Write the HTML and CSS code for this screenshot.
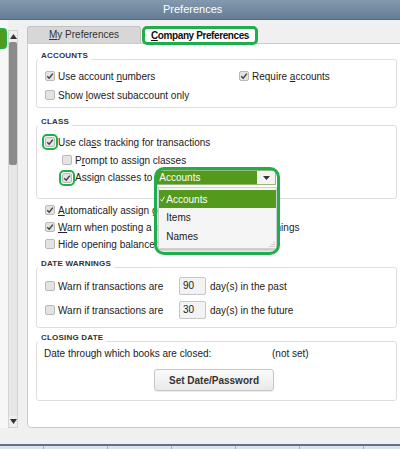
FILE: index.html
```html
<!DOCTYPE html>
<html lang="en">
<head>
    <meta charset="UTF-8">
    <title>Preferences</title>
    <link rel="stylesheet" href="styles.css">
</head>
<body>
    <header class="titlebar">Preferences</header>

    <div class="main">
        <div class="side">
            <div class="side-list"><div class="side-sel"></div></div>
            <div class="scrollbar">
                <div class="sb-btn"><svg width="7" height="5" viewBox="0 0 7 5"><path d="M0 5 3.5 0 7 5z" fill="#333"/></svg></div>
                <div class="sb-track"><div class="sb-thumb"></div></div>
                <div class="sb-btn"><svg width="7" height="5" viewBox="0 0 7 5"><path d="M0 0 3.5 5 7 0z" fill="#333"/></svg></div>
            </div>
        </div>

        <div class="content">
            <div class="tabs">
                <div class="tab"><u>M</u>y Preferences</div>
                <div class="tab active"><u>C</u>ompany Preferences</div>
            </div>

            <div class="panel">
                <section class="group">
                    <h3 class="group-title">ACCOUNTS</h3>
                    <div class="grid2">
                        <label class="row"><span class="check on"><svg viewBox="0 0 8 8"><path d="M1.2 4.2 3.2 6.2 6.8 1.6"/></svg></span><span>Use account <u>n</u>umbers</span></label>
                        <label class="row"><span class="check on"><svg viewBox="0 0 8 8"><path d="M1.2 4.2 3.2 6.2 6.8 1.6"/></svg></span><span>Require <u>a</u>ccounts</span></label>
                        <label class="row"><span class="check"></span><span>Show <u>l</u>owest subaccount only</span></label>
                    </div>
                </section>

                <section class="group group-class">
                    <h3 class="group-title">CLASS</h3>
                    <label class="row r1"><span class="check on ring"><svg viewBox="0 0 8 8"><path d="M1.2 4.2 3.2 6.2 6.8 1.6"/></svg></span><span>Use cla<u>s</u>s tracking for transactions</span></label>
                    <label class="row r2 indent"><span class="check"></span><span>P<u>r</u>ompt to assign classes</span></label>
                    <div class="row r3 indent">
                        <span class="check on ring"><svg viewBox="0 0 8 8"><path d="M1.2 4.2 3.2 6.2 6.8 1.6"/></svg></span>
                        <span>Assi<u>g</u>n classes to</span>
                        <div class="combo">
                            <div class="select">
                                <div class="select-value">Accounts</div>
                                <div class="select-arrow"><svg width="7" height="4" viewBox="0 0 7 4"><path d="M0 0 3.5 4 7 0z" fill="#333"/></svg></div>
                            </div>
                            <div class="popup">
                                <div class="popup-item sel"><span class="tick"><svg width="5" height="6" viewBox="0 0 5 6"><path d="M0.5 3.4 1.8 5.2 4.6 0.6" fill="none" stroke="#fff" stroke-width="0.9"/></svg></span>Accounts</div>
                                <div class="popup-item"><span class="tick"></span>Items</div>
                                <div class="popup-item"><span class="tick"></span>Names</div>
                                <svg class="grip" width="6" height="6" viewBox="0 0 6 6"><path d="M5 1v1M3 3v1M5 3v1M1 5v1M3 5v1M5 5v1" stroke="#aaa" stroke-width="1"/></svg>
                            </div>
                            <div class="ring-box"></div>
                        </div>
                    </div>
                </section>

                <div class="opts">
                    <label class="row"><span class="check on"><svg viewBox="0 0 8 8"><path d="M1.2 4.2 3.2 6.2 6.8 1.6"/></svg></span><span><u>A</u>utomatically assign general journal entry number</span></label>
                    <label class="row"><span class="check on"><svg viewBox="0 0 8 8"><path d="M1.2 4.2 3.2 6.2 6.8 1.6"/></svg></span><span><u>W</u>arn when posting a transaction to Retained Earnings</span></label>
                    <label class="row"><span class="check"></span><span>Hide opening balance fields</span></label>
                </div>

                <section class="group group-date">
                    <h3 class="group-title">DATE WARNINGS</h3>
                    <div class="date-row">
                        <label class="date-label"><span class="check"></span><span>Warn if transactions are</span></label>
                        <span class="num">90</span>
                        <span>day(s) in the past</span>
                    </div>
                    <div class="date-row">
                        <label class="date-label"><span class="check"></span><span>Warn if transactions are</span></label>
                        <span class="num">30</span>
                        <span>day(s) in the future</span>
                    </div>
                </section>

                <section class="group group-closing">
                    <h3 class="group-title">CLOSING DATE</h3>
                    <div class="closing-row">
                        <span>Date through which books are closed:</span>
                        <span>(not set)</span>
                    </div>
                    <button class="btn">Set Date/Password</button>
                </section>
            </div>
        </div>
    </div>

    <div class="desk"></div>
    <div class="taskbar">
        <span class="first"></span><span></span><span></span><span></span><span></span><span></span>
    </div>
</body>
</html>
```

FILE: styles.css
```css
* {
    box-sizing: border-box;
}

body {
    margin: 0;
    width: 400px;
    height: 449px;
    overflow: hidden;
    font-family: "Liberation Sans", Arial, sans-serif;
    font-size: 10px;
    color: #222;
    background: #f0f0f0;
}

u {
    text-underline-offset: 1px;
}

.titlebar {
    height: 20px;
    padding-left: 163px;
    line-height: 19px;
    font-size: 11px;
    color: #fff;
    background: linear-gradient(#8399ae, #647d95);
    border-bottom: 1px solid #52697f;
}

.main {
    display: flex;
    height: 408px;
}

/* left list edge + scrollbar */
.side {
    display: flex;
}

.side-list {
    width: 8px;
    background: #f7f7f7;
}

.side-sel {
    margin-top: 8px;
    width: 7px;
    height: 21px;
    background: #4f9b1d;
    border: 2px solid #22ad4a;
    border-left: 0;
    border-radius: 0 4px 4px 0;
}

.scrollbar {
    display: flex;
    flex-direction: column;
    width: 10px;
    height: 398px;
    margin-top: 10px;
    background: #e6e6e6;
    border: 1px solid #d4d4d4;
}

.sb-btn {
    height: 11px;
    display: flex;
    align-items: center;
    justify-content: center;
    background: #eeeeee;
}

.sb-track {
    flex: 1;
}

.sb-thumb {
    height: 123px;
    background: #8b8b8b;
    border-radius: 2px;
}

/* tabs + panel */
.content {
    flex: 1;
    display: flex;
    flex-direction: column;
    margin-left: 9px;
    margin-right: -3px;
    padding-top: 6px;
}

.tabs {
    display: flex;
    align-items: flex-start;
    height: 17px;
}

.tab {
    width: 114px;
    height: 17px;
    line-height: 16px;
    text-align: center;
    color: #333;
    background: #d7d7d7;
    border: 1px solid #c2c2c2;
    border-bottom: 0;
    border-radius: 3px 3px 0 0;
}

.tab.active {
    position: relative;
    z-index: 1;
    width: 116px;
    height: 19px;
    margin-left: 1px;
    line-height: 13px;
    font-weight: bold;
    letter-spacing: -0.4px;
    color: #111;
    background: #fff;
    border: 3px solid #1fae4b;
    border-radius: 5px;
}

.panel {
    flex: 1;
    padding: 15px 5px 0 8px;
    background: #fff;
    border: 1px solid #cbcbcb;
    border-radius: 0 0 0 4px;
}

.group {
    padding: 0 8px 5px;
    border: 1px solid #dedede;
    border-radius: 3px;
}

.group-title {
    width: fit-content;
    margin: -9px 0 0 -7px;
    padding: 0 3px;
    font-size: 8px;
    font-weight: bold;
    line-height: 10px;
    letter-spacing: 0.2px;
    color: #333;
    background: #fff;
}

.grid2 {
    display: grid;
    grid-template-columns: 194px 1fr;
    row-gap: 5px;
    margin-top: 8px;
}

.row {
    display: flex;
    align-items: center;
    height: 14px;
    white-space: nowrap;
}

.check {
    flex: none;
    display: flex;
    align-items: center;
    justify-content: center;
    width: 10px;
    height: 10px;
    margin-right: 3px;
    background: #e3e3e3;
    border: 1px solid #b9b9b9;
    border-radius: 2px;
}

.check svg {
    width: 8px;
    height: 8px;
}

.check path {
    fill: none;
    stroke: #444;
    stroke-width: 1.5;
}

.check.ring {
    outline: 2px solid #1fae4b;
    outline-offset: 1px;
}

/* class section */
.group-class {
    margin-top: 17px;
    padding-bottom: 13px;
}

.r1 {
    margin-top: 8px;
}

.r2 {
    margin-top: 4px;
}

.r3 {
    margin-top: 3px;
    height: 15px;
}

.indent {
    padding-left: 17px;
}

.combo {
    position: relative;
    width: 120px;
    height: 15px;
    margin-left: 4px;
}

.select {
    display: flex;
    height: 15px;
    border: 1px solid #97b87a;
}

.select-value {
    flex: 1;
    padding-left: 2px;
    line-height: 13px;
    color: #fff;
    background: #52991c;
}

.select-arrow {
    width: 18px;
    display: flex;
    align-items: center;
    justify-content: center;
    background: #f3f3f3;
}

.popup {
    position: absolute;
    left: 2px;
    top: 17px;
    z-index: 2;
    width: 119px;
    height: 62px;
    padding-top: 2px;
    background: #f5f5f5;
    border: 1px solid #cfcfcf;
    box-shadow: 0 2px 3px rgba(0, 0, 0, 0.25);
}

.popup-item {
    display: flex;
    align-items: center;
    height: 18px;
    padding-left: 1px;
}

.popup-item + .popup-item {
    height: 19px;
}

.popup-item.sel {
    color: #fff;
    background: #52991c;
}

.tick {
    width: 6px;
    display: flex;
    align-items: center;
}

.grip {
    position: absolute;
    right: 1px;
    bottom: 1px;
}

.ring-box {
    position: absolute;
    left: -2px;
    top: -3px;
    z-index: 3;
    width: 126px;
    height: 88px;
    border: 3px solid #1fae4b;
    border-radius: 10px;
    pointer-events: none;
}

/* loose options */
.opts {
    display: flex;
    flex-direction: column;
    gap: 3px;
    margin-top: 4px;
    padding-left: 9px;
}

/* date warnings */
.group-date {
    margin-top: 16px;
    padding-bottom: 7px;
}

.group-date .group-title {
    margin-bottom: 7px;
}

.date-row {
    display: flex;
    align-items: center;
    height: 20px;
}

.date-row + .date-row {
    margin-top: 4px;
}

.date-label {
    display: flex;
    align-items: center;
    width: 134px;
}

.num {
    width: 27px;
    height: 18px;
    margin-right: 4px;
    padding-left: 3px;
    line-height: 16px;
    background: #f3f3f3;
    border: 1px solid #c5c5c5;
    border-radius: 2px;
}

/* closing date */
.group-closing {
    margin-top: 13px;
    padding-bottom: 9px;
}

.closing-row {
    display: grid;
    grid-template-columns: 228px auto;
    align-items: center;
    height: 14px;
    margin: 3px 0 0 -1px;
}

.btn {
    display: block;
    width: 120px;
    height: 22px;
    margin: 9px 0 0 109px;
    padding: 0;
    font-family: inherit;
    font-size: 10px;
    font-weight: bold;
    color: #333;
    background: linear-gradient(#fbfbfb, #e9e9e9);
    border: 1px solid #c6c6c6;
    border-radius: 3px;
    box-shadow: 0 1px 1px rgba(0, 0, 0, 0.08);
}

/* bottom strip */
.desk {
    height: 16px;
}

.taskbar {
    display: flex;
    height: 5px;
    background: #dce2e8;
    border-top: 2px solid #5a748e;
}

.taskbar span {
    width: 64px;
    border-right: 1px solid #aab6c2;
}

.taskbar span.first {
    width: 44px;
}
```
